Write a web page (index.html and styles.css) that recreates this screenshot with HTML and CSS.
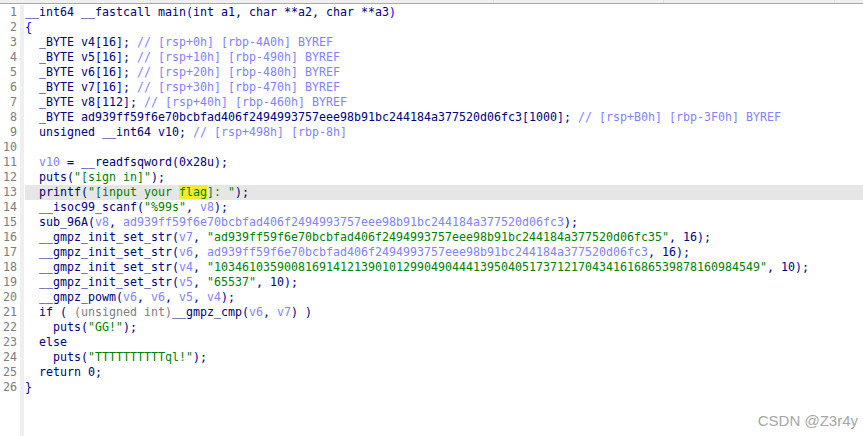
FILE: index.html
```html
<!DOCTYPE html>
<html>
<head>
<meta charset="utf-8">
<link rel="stylesheet" href="styles.css">
</head>
<body>
<div class="tabs">
  <div class="tab t1"></div>
  <div class="tab t2"></div>
  <div class="tab t3"></div>
  <div class="tab t4"></div>
  <div class="tab t5"></div>
</div>
<div class="editor">
  <div class="gutter">
    <div>1</div><div>2</div><div>3</div><div>4</div><div>5</div><div>6</div><div>7</div><div>8</div><div>9</div><div>10</div><div>11</div><div>12</div><div>13</div><div>14</div><div>15</div><div>16</div><div>17</div><div>18</div><div>19</div><div>20</div><div>21</div><div>22</div><div>23</div><div>24</div><div>25</div><div>26</div>
  </div>
  <div class="code">
<div class="ln">__int64 __fastcall main<span class="b">(</span>int a1, char **a2, char **a3<span class="b">)</span></div>
<div class="ln"><span class="b">{</span></div>
<div class="ln">  _BYTE v4[16]; <span class="c">// [rsp+0h] [rbp-4A0h] BYREF</span></div>
<div class="ln">  _BYTE v5[16]; <span class="c">// [rsp+10h] [rbp-490h] BYREF</span></div>
<div class="ln">  _BYTE v6[16]; <span class="c">// [rsp+20h] [rbp-480h] BYREF</span></div>
<div class="ln">  _BYTE v7[16]; <span class="c">// [rsp+30h] [rbp-470h] BYREF</span></div>
<div class="ln">  _BYTE v8[112]; <span class="c">// [rsp+40h] [rbp-460h] BYREF</span></div>
<div class="ln">  _BYTE ad939ff59f6e70bcbfad406f2494993757eee98b91bc244184a377520d06fc3[1000]; <span class="c">// [rsp+B0h] [rbp-3F0h] BYREF</span></div>
<div class="ln">  unsigned __int64 v10; <span class="c">// [rsp+498h] [rbp-8h]</span></div>
<div class="ln"> </div>
<div class="ln">  <span class="v">v10</span> = __readfsqword(0x28u);</div>
<div class="ln">  puts(<span class="s">"[sign in]"</span>);</div>
<div class="ln cur">  printf(<span class="s">"[input your <span class="hl">flag</span>]: "</span>);</div>
<div class="ln">  __isoc99_scanf(<span class="s">"%99s"</span>, <span class="v">v8</span>);</div>
<div class="ln">  sub_96A(<span class="v">v8</span>, <span class="v">ad939ff59f6e70bcbfad406f2494993757eee98b91bc244184a377520d06fc3</span>);</div>
<div class="ln">  __gmpz_init_set_str(<span class="v">v7</span>, <span class="s">"ad939ff59f6e70bcbfad406f2494993757eee98b91bc244184a377520d06fc35"</span>, 16);</div>
<div class="ln">  __gmpz_init_set_str(<span class="v">v6</span>, <span class="v">ad939ff59f6e70bcbfad406f2494993757eee98b91bc244184a377520d06fc3</span>, 16);</div>
<div class="ln">  __gmpz_init_set_str(<span class="v">v4</span>, <span class="s">"103461035900816914121390101299049044413950405173712170434161686539878160984549"</span>, 10);</div>
<div class="ln">  __gmpz_init_set_str(<span class="v">v5</span>, <span class="s">"65537"</span>, 10);</div>
<div class="ln">  __gmpz_powm(<span class="v">v6</span>, <span class="v">v6</span>, <span class="v">v5</span>, <span class="v">v4</span>);</div>
<div class="ln">  if ( <span class="g">(unsigned int)</span>__gmpz_cmp(<span class="v">v6</span>, <span class="v">v7</span>) )</div>
<div class="ln">    puts(<span class="s">"GG!"</span>);</div>
<div class="ln">  else</div>
<div class="ln">    puts(<span class="s">"TTTTTTTTTTql!"</span>);</div>
<div class="ln">  return 0;</div>
<div class="ln">}</div>
  </div>
</div>
<div class="watermark">CSDN @Z3r4y</div>
</body>
</html>
```
FILE: styles.css
```css
html, body {
  margin: 0;
  padding: 0;
  background: #ffffff;
}
body {
  width: 863px;
  height: 436px;
  overflow: hidden;
  position: relative;
}
.tabs {
  display: flex;
  height: 3px;
  background: #f0f0f0;
  border-bottom: 1px solid #a9a9a9;
}
.tab {
  border-right: 1px solid #d9d9d9;
  box-sizing: border-box;
}
.t1 { width: 151px; }
.t2 { width: 343px; }
.t3 { width: 170px; }
.t4 { width: 171px; }
.t5 { flex: 1; border-right: none; }
.editor {
  display: flex;
  height: 432px;
  padding-top: 1px;
  box-sizing: border-box;
  font-family: "DejaVu Sans Mono", "Liberation Mono", monospace;
  font-size: 11.63px;
  line-height: 15px;
}
.gutter {
  width: 20px;
  box-sizing: border-box;
  padding-right: 3px;
  text-align: right;
  color: #7d7d7d;
  border-right: 4px solid #efefef;
  width: 24px;
  flex: none;
}
.code {
  flex: 1;
  padding-left: 1px;
  color: #000080;
}
.ln {
  white-space: pre;
  height: 15px;
}
.cur {
  background: #e6e6e6;
}
.c { color: #8282ff; }
.v { color: #8282ff; }
.s { color: #008000; }
.g { color: #808080; }
.b { color: #0000e0; }
.hl {
  background: #f0ec30;
}
.watermark {
  position: absolute;
  top: 413px;
  right: 5px;
  font-family: "Liberation Sans", Arial, sans-serif;
  font-size: 15px;
  line-height: 15px;
  color: #a6a6a6;
  text-shadow: 0 0 1px #ffffff;
}
```
